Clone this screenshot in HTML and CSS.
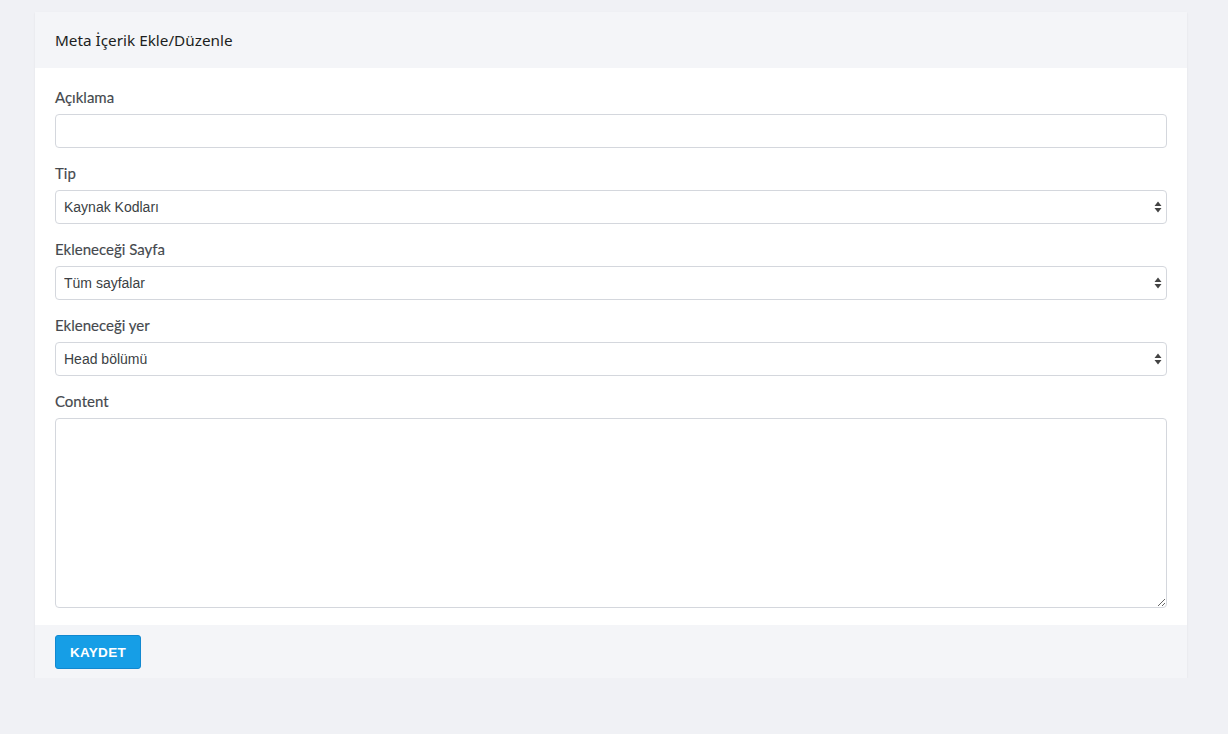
FILE: index.html
```html
<!DOCTYPE html>
<html lang="tr">
<head>
<meta charset="utf-8">
<title>Meta İçerik Ekle/Düzenle</title>
<link rel="stylesheet" href="styles.css">
</head>
<body>
<div class="page">
  <div class="card">
    <div class="card-header">Meta İçerik Ekle/Düzenle</div>
    <div class="card-body">
      <div class="group">
        <label class="label">Açıklama</label>
        <input class="control" type="text">
      </div>
      <div class="group">
        <label class="label">Tip</label>
        <div class="select-wrap">
          <select class="control select"><option>Kaynak Kodları</option></select>
          <svg class="arrows" width="8" height="12" viewBox="0 0 8 12"><path d="M4 0.5 L7.5 5 H0.5 Z M0.5 7 H7.5 L4 11.5 Z" fill="#444"/></svg>
        </div>
      </div>
      <div class="group">
        <label class="label">Ekleneceği Sayfa</label>
        <div class="select-wrap">
          <select class="control select"><option>Tüm sayfalar</option></select>
          <svg class="arrows" width="8" height="12" viewBox="0 0 8 12"><path d="M4 0.5 L7.5 5 H0.5 Z M0.5 7 H7.5 L4 11.5 Z" fill="#444"/></svg>
        </div>
      </div>
      <div class="group">
        <label class="label">Ekleneceği yer</label>
        <div class="select-wrap">
          <select class="control select"><option>Head bölümü</option></select>
          <svg class="arrows" width="8" height="12" viewBox="0 0 8 12"><path d="M4 0.5 L7.5 5 H0.5 Z M0.5 7 H7.5 L4 11.5 Z" fill="#444"/></svg>
        </div>
      </div>
      <div class="group last">
        <label class="label">Content</label>
        <textarea class="control textarea"></textarea>
      </div>
    </div>
    <div class="card-footer">
      <button class="btn" type="button">KAYDET</button>
    </div>
  </div>
</div>
</body>
</html>
```
FILE: styles.css
```css
* { box-sizing: border-box; }
html, body { margin: 0; padding: 0; }
body {
  background: #f0f1f5;
  font-family: "Liberation Sans", Arial, sans-serif;
  color: #212529;
}
.page {
  padding: 12px 41px 0 35px;
}
.card {
  background: #fff;
  box-shadow: 0 1px 2px rgba(0,0,0,0.07);
  width: 1152px;
}
.card-header {
  background: #f4f5f8;
  height: 56px;
  display: flex;
  align-items: center;
  padding: 0 20px;
  font-family: "Noto Sans", "Liberation Sans", sans-serif;
  font-size: 15.3px;
  color: #1c1e21;
}
.card-body {
  padding: 20px 20px 1px 20px;
}
.group {
  display: flex;
  flex-direction: column;
  margin-bottom: 16px;
}
.label {
  font-family: Lato, "Noto Sans", sans-serif;
  font-size: 15px;
  line-height: 18px;
  color: #45494e;
  margin-bottom: 8px;
  -webkit-text-stroke: 0.15px #45494e;
}
.control {
  width: 100%;
  height: 34px;
  border: 1px solid #d4d7dd;
  border-radius: 4px;
  background: #fff;
  font-family: "Liberation Sans", Arial, sans-serif;
  font-size: 14px;
  color: #3b3f44;
  padding: 0 8px;
  margin: 0;
  outline: none;
}
.select-wrap {
  position: relative;
}
.select {
  -webkit-appearance: none;
  appearance: none;
  display: block;
}
.arrows {
  position: absolute;
  right: 5px;
  top: 11px;
  pointer-events: none;
}
.textarea {
  height: 190px;
  resize: vertical;
  display: block;
}
.card-footer {
  background: #f4f5f8;
  height: 53px;
  padding: 10px 20px;
}
.btn {
  width: 86px;
  height: 34px;
  background: #169ee6;
  border: 1px solid #1188d0;
  border-radius: 3px;
  color: #fff;
  font-family: "Liberation Sans", Arial, sans-serif;
  font-weight: bold;
  font-size: 13.5px;
  letter-spacing: 0.3px;
  padding: 0;
}
```
